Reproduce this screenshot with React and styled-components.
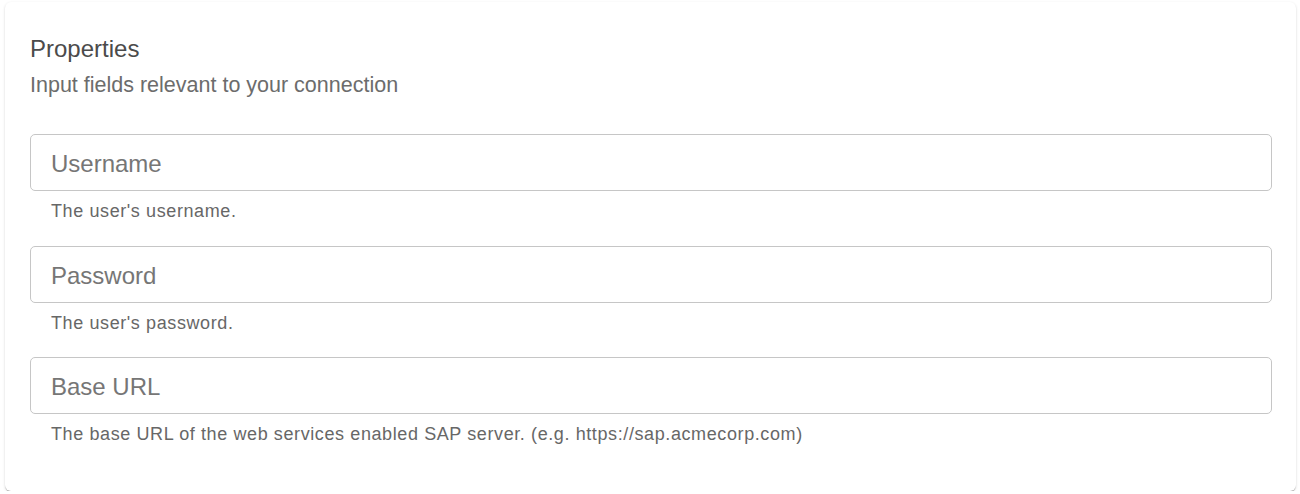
import React from 'react';
import styled, { createGlobalStyle } from 'styled-components';

const GlobalStyle = createGlobalStyle`
  html, body {
    margin: 0;
    padding: 0;
    background: #ffffff;
    font-family: "Liberation Sans", Arial, Helvetica, sans-serif;
  }
`;

const Page = styled.div`
  padding: 2px 4px 0 5px;
`;

const Card = styled.section`
  box-sizing: border-box;
  height: 489px;
  background: #ffffff;
  border-radius: 6px;
  box-shadow: 0 2px 1px -1px rgba(0, 0, 0, 0.2), 0 1px 1px 0 rgba(0, 0, 0, 0.14),
    0 1px 3px 0 rgba(0, 0, 0, 0.12);
  padding: 31px 24px 44px 25px;
  display: flex;
  flex-direction: column;
`;

const Title = styled.h2`
  margin: 0;
  font-size: 24px;
  line-height: 32px;
  font-weight: 400;
  color: #4b4b4b;
`;

const Subtitle = styled.p`
  margin: 6px 0 0;
  font-size: 21.5px;
  line-height: 28px;
  color: #6c6c6c;
`;

const Fields = styled.div`
  margin-top: 35px;
  display: flex;
  flex-direction: column;
  gap: 22.5px;
`;

const Field = styled.div`
  display: flex;
  flex-direction: column;
`;

const Input = styled.input`
  box-sizing: border-box;
  height: 57px;
  width: 100%;
  border: 1px solid #c6c6c6;
  border-radius: 5px;
  padding: 3px 20px 0;
  font-family: inherit;
  font-size: 24px;
  color: #333;
  background: #fff;
  outline: none;

  &::placeholder {
    color: #767676;
    opacity: 1;
  }
`;

const Helper = styled.span`
  margin: 8px 0 0 21px;
  font-size: 18px;
  line-height: 24px;
  letter-spacing: 0.6px;
  color: #676767;
`;

const fields = [
  { name: 'username', label: 'Username', help: "The user's username." },
  { name: 'password', label: 'Password', help: "The user's password." },
  {
    name: 'baseUrl',
    label: 'Base URL',
    help: 'The base URL of the web services enabled SAP server. (e.g. https://sap.acmecorp.com)',
  },
];

export default function App() {
  return (
    <Page>
      <GlobalStyle />
      <Card>
        <Title>Properties</Title>
        <Subtitle>Input fields relevant to your connection</Subtitle>
        <Fields>
          {fields.map((f) => (
            <Field key={f.name}>
              <Input name={f.name} placeholder={f.label} />
              <Helper>{f.help}</Helper>
            </Field>
          ))}
        </Fields>
      </Card>
    </Page>
  );
}
